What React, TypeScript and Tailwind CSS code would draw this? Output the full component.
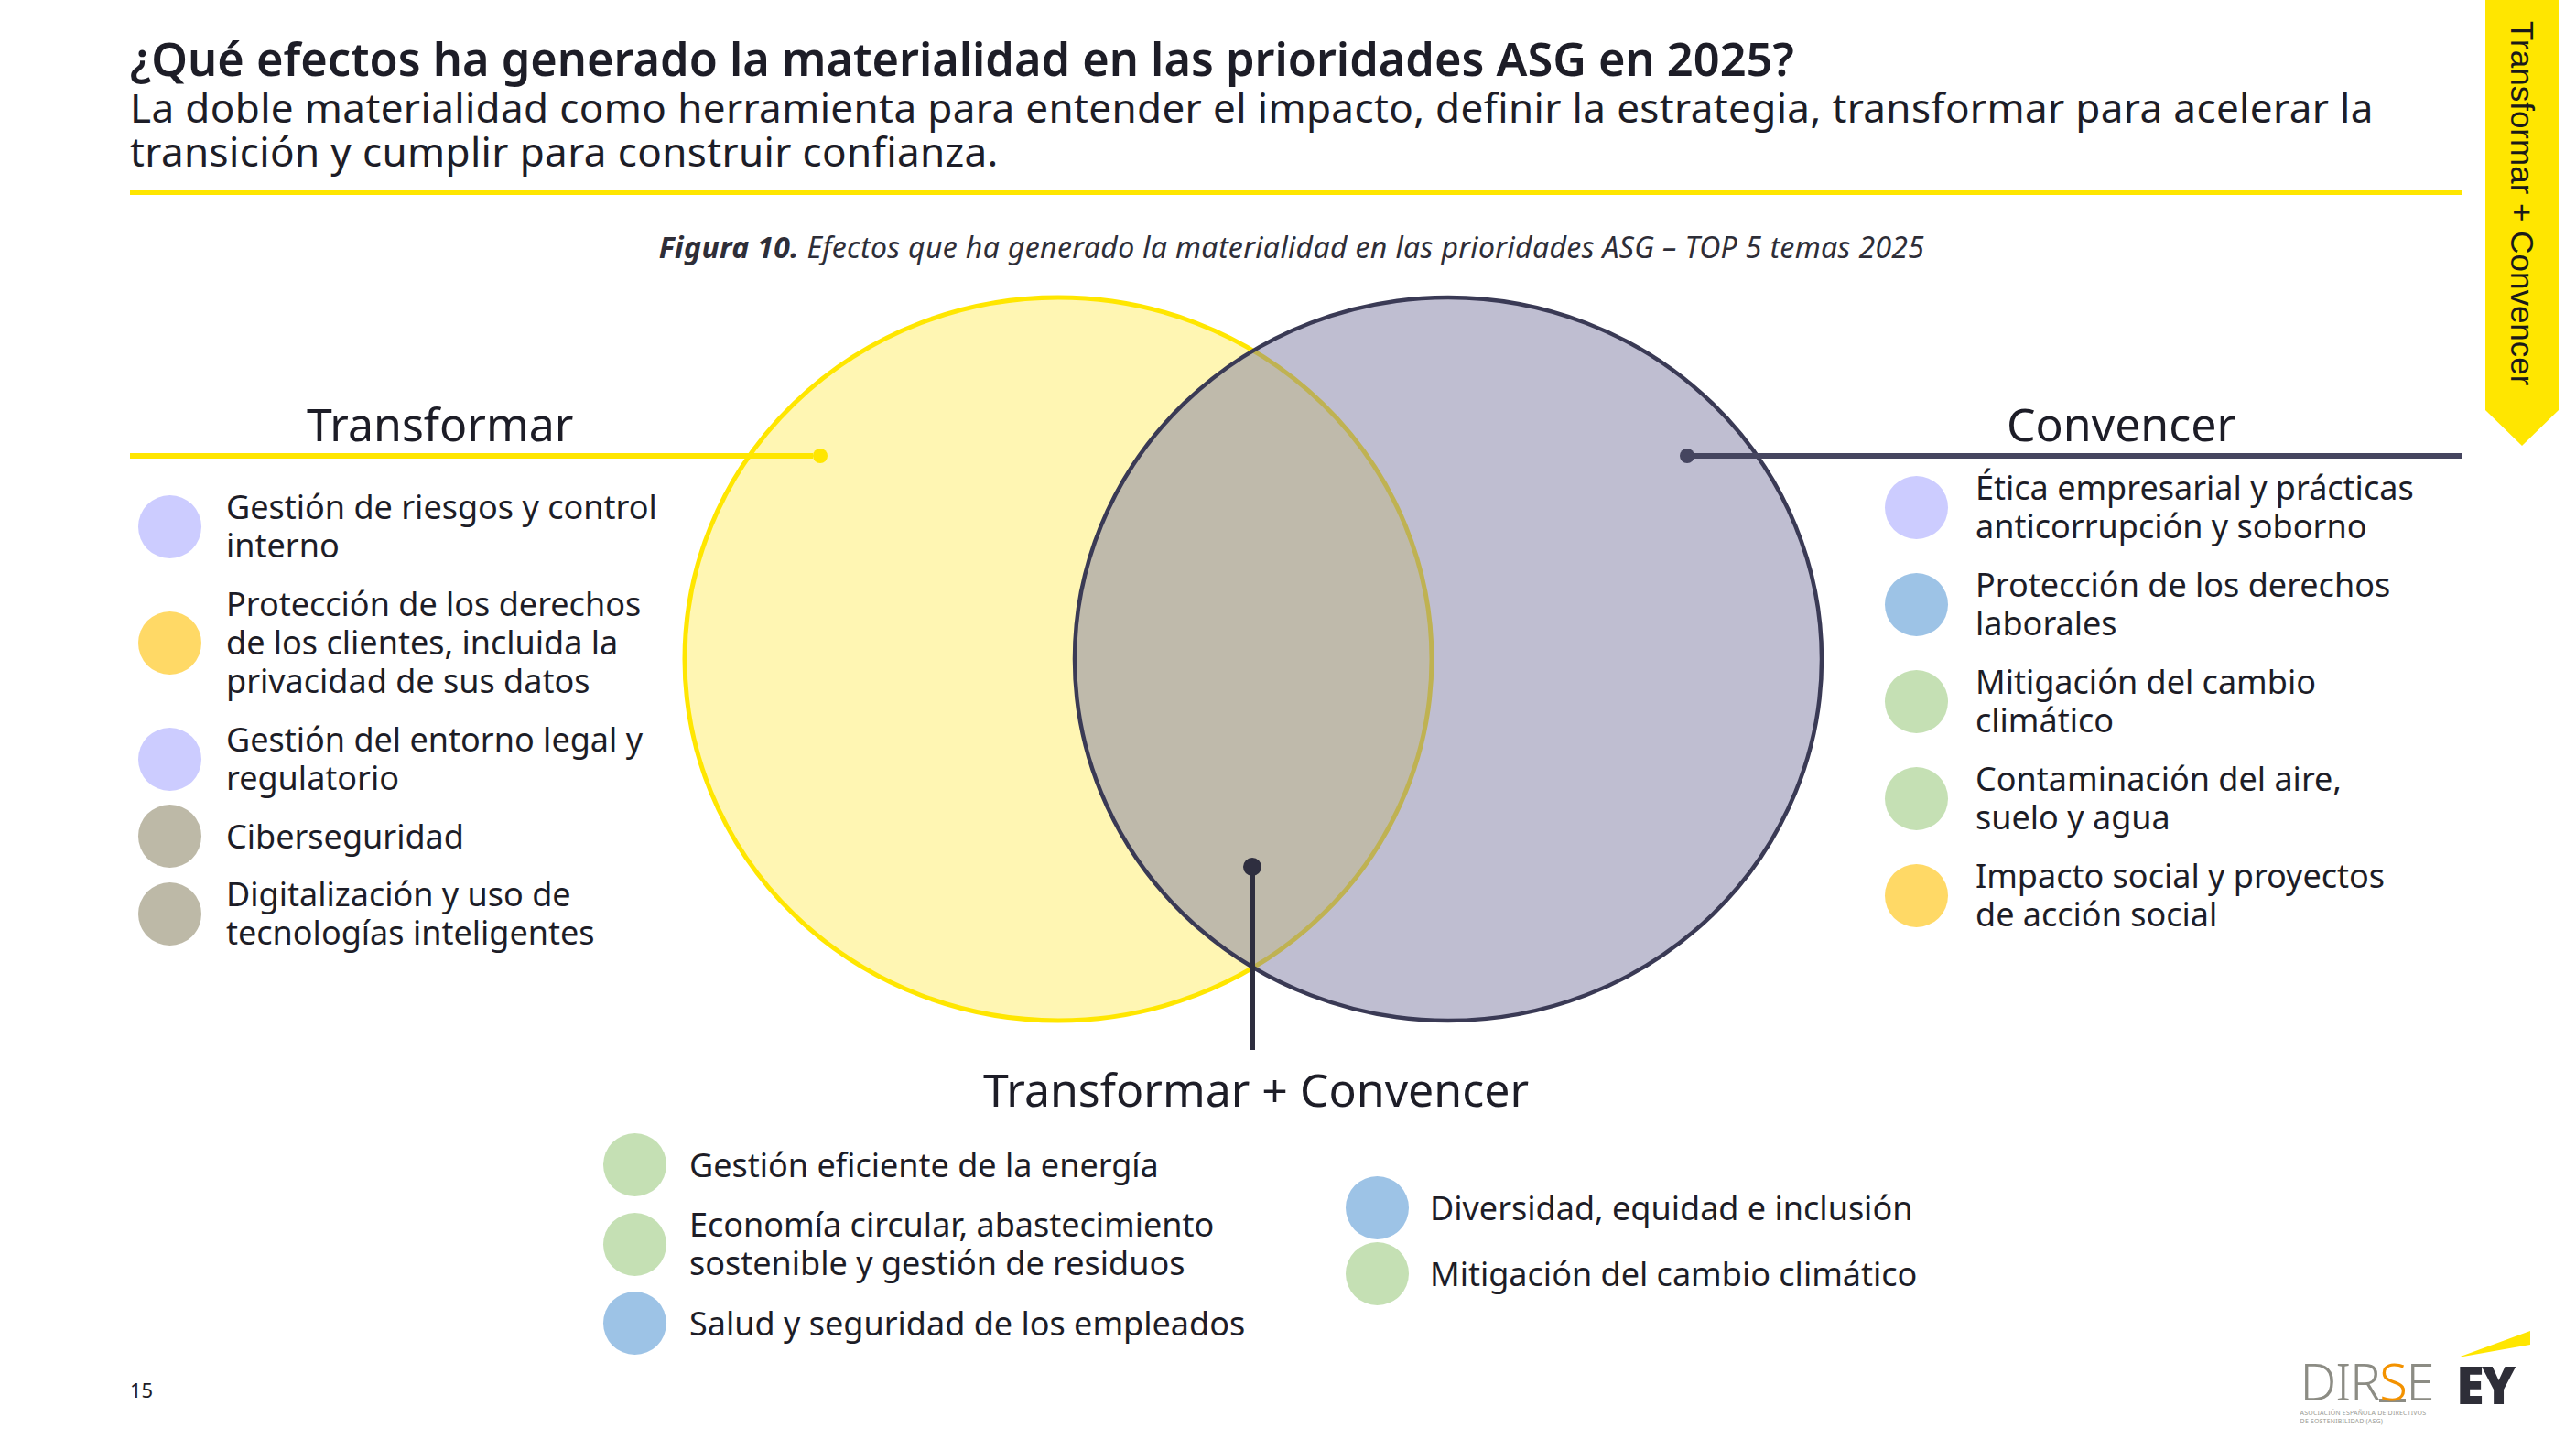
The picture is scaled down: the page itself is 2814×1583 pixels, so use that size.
import React from 'react';

type Item = { c: string; l: string[]; m?: string };

const LAV = 'bg-[#ccccff]';
const YEL = 'bg-[#ffd966]';
const TAU = 'bg-[#bdb9a7]';
const BLU = 'bg-[#9dc3e6]';
const GRN = 'bg-[#c5e0b4]';

const leftItems: Item[] = [
  { c: LAV, l: ['Gestión de riesgos y control', 'interno'], m: 'mt-[27px]' },
  { c: YEL, l: ['Protección de los derechos', 'de los clientes, incluida la', 'privacidad de sus datos'], m: 'mt-[22px]' },
  { c: LAV, l: ['Gestión del entorno legal y', 'regulatorio'], m: 'mt-[22px]' },
  { c: TAU, l: ['Ciberseguridad'], m: 'mt-[8px]' },
  { c: TAU, l: ['Digitalización y uso de', 'tecnologías inteligentes'], m: 'mt-[8px]' },
];

const rightItems: Item[] = [
  { c: LAV, l: ['Ética empresarial y prácticas', 'anticorrupción y soborno'] },
  { c: BLU, l: ['Protección de los derechos', 'laborales'] },
  { c: GRN, l: ['Mitigación del cambio', 'climático'] },
  { c: GRN, l: ['Contaminación del aire,', 'suelo y agua'] },
  { c: YEL, l: ['Impacto social y proyectos', 'de acción social'] },
];

const bothLeft: Item[] = [
  { c: GRN, l: ['Gestión eficiente de la energía'] },
  { c: GRN, l: ['Economía circular, abastecimiento', 'sostenible y gestión de residuos'] },
  { c: BLU, l: ['Salud y seguridad de los empleados'] },
];

const bothRight: Item[] = [
  { c: BLU, l: ['Diversidad, equidad e inclusión'] },
  { c: GRN, l: ['Mitigación del cambio climático'] },
];

function Row({ item, gap }: { item: Item; gap: string }) {
  return (
    <div className={`flex items-center ${gap} ${item.m ?? ''}`}>
      <div className={`w-[69px] h-[69px] shrink-0 rounded-full ${item.c}`} />
      <div className="text-[36px] leading-[42px] whitespace-nowrap">
        {item.l.map((t, i) => (
          <div key={i}>{t}</div>
        ))}
      </div>
    </div>
  );
}

export default function App() {
  return (
    <div className="relative w-[2814px] h-[1583px] overflow-hidden bg-white font-['Noto_Sans','Open_Sans',sans-serif] text-[#1d1d27]">
      {/* side tab */}
      <div className="absolute top-0 left-[2715px] w-[80px] h-[487px] bg-[#ffe600] [clip-path:polygon(0_0,100%_0,100%_92%,50%_100%,0_92%)] flex justify-center pt-[23px]">
        <span className="[writing-mode:vertical-rl] font-['Liberation_Sans',sans-serif] text-[35px] leading-none text-[#1a1a1a]">
          Transformar + Convencer
        </span>
      </div>

      {/* header */}
      <header className="pl-[142px] pr-[124px] pt-[34px]">
        <h1 className="text-[50.5px] leading-[59px] font-semibold whitespace-nowrap">
          ¿Qué efectos ha generado la materialidad en las prioridades ASG en 2025?
        </h1>
        <p className="text-[44px] leading-[48px] tracking-[0.37px] whitespace-nowrap">
          La doble materialidad como herramienta para entender el impacto, definir la estrategia, transformar para acelerar la
          <br />
          transición y cumplir para construir confianza.
        </p>
        <div className="mt-[19px] h-[5px] bg-[#ffe600]" />
      </header>

      <p className="mt-[38px] pl-[142px] pr-[134px] text-center text-[32px] leading-[38px] tracking-[0.35px] italic text-[#2e2e38]">
        <span className="font-bold">Figura 10.</span> Efectos que ha generado la materialidad en las prioridades ASG – TOP 5 temas 2025
      </p>

      {/* venn diagram */}
      <section className="relative mt-[12px] h-[859px]">
        <svg className="absolute inset-0" width="2814" height="859" viewBox="0 301 2814 859">
          <ellipse cx="1156" cy="720" rx="408" ry="395" fill="#fff6b3" stroke="#ffe600" strokeWidth="5" />
          <ellipse cx="1582" cy="720" rx="408" ry="395" fill="#7f7da3" fillOpacity="0.5" stroke="#3a3a55" strokeWidth="4.5" />
          <line x1="1368" y1="947" x2="1368" y2="1147" stroke="#2e2e3f" strokeWidth="6" />
          <circle cx="1368" cy="947" r="10" fill="#2e2e3f" />
        </svg>

        <div className="relative flex justify-between pl-[142px] pr-[125px] pt-[132px]">
          <div className="w-[762px]">
            <h2 className="pl-[193px] text-[50px] leading-[60px]">Transformar</h2>
            <div className="-mt-[3px] flex h-[16px] items-center">
              <div className="h-[6px] flex-1 bg-[#ffe600]" />
              <div className="w-[16px] h-[16px] rounded-full bg-[#ffe600]" />
            </div>
            <div className="pl-[9px]">
              {leftItems.map((it, i) => (
                <Row key={i} item={it} gap="gap-[27px]" />
              ))}
            </div>
          </div>

          <div className="w-[854px]">
            <h2 className="pl-[357px] text-[50px] leading-[60px]">Convencer</h2>
            <div className="-mt-[3px] flex h-[16px] items-center">
              <div className="w-[16px] h-[16px] rounded-full bg-[#45455f]" />
              <div className="h-[6px] flex-1 bg-[#45455f]" />
            </div>
            <div className="mt-[6px] flex flex-col gap-[22px] pl-[224px]">
              {rightItems.map((it, i) => (
                <Row key={i} item={it} gap="gap-[30px]" />
              ))}
            </div>
          </div>
        </div>
      </section>

      {/* shared topics */}
      <h2 className="pr-[70px] text-center text-[50px] leading-[60px]">Transformar + Convencer</h2>
      <div className="mt-[18px] flex items-start pl-[659px]">
        <div className="flex w-[811px] flex-col gap-[10px]">
          {bothLeft.map((it, i) => (
            <Row key={i} item={it} gap="gap-[25px]" />
          ))}
        </div>
        <div className="mt-[47px] flex flex-col gap-[3px]">
          {bothRight.map((it, i) => (
            <Row key={i} item={it} gap="gap-[23px]" />
          ))}
        </div>
      </div>

      {/* footer */}
      <footer className="absolute inset-x-0 bottom-[26px] flex items-end justify-between pl-[142px] pr-[49px]">
        <span className="mb-[26px] text-[22px] leading-[26px]">15</span>
        <div className="flex items-end gap-[25px]">
          <div className="flex flex-col">
            <div className="flex text-[56px] leading-[56px] font-light tracking-tight text-[#8c8c84]">
              <span>DIR</span>
              <span className="h-[52px] border-b-[4px] border-[#8c8c84] text-[#f39200]">S</span>
              <span>E</span>
            </div>
            <div className="mt-[3px] text-[7px] leading-[9px] tracking-wide text-[#9a9a92]">
              <div>ASOCIACIÓN ESPAÑOLA DE DIRECTIVOS</div>
              <div>DE SOSTENIBILIDAD (ASG)</div>
            </div>
          </div>
          <div className="mb-[17px] flex flex-col">
            <svg width="82" height="31" viewBox="0 0 82 31">
              <polygon points="2,30 81,1 81,16" fill="#ffe600" />
            </svg>
            <span className="text-[56px] leading-[56px] font-black tracking-tighter text-[#2e2e38]">EY</span>
          </div>
        </div>
      </footer>
    </div>
  );
}
